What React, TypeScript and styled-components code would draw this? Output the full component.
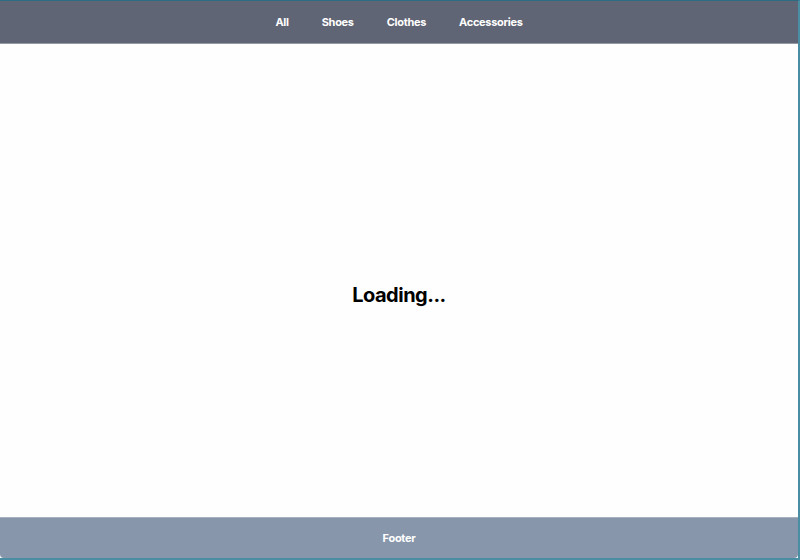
import React from "react";
import styled, { createGlobalStyle } from "styled-components";

const Global = createGlobalStyle`
  html, body { margin: 0; padding: 0; background: #2d6d84; }
  body { font-family: Inter, "Noto Sans", "Liberation Sans", sans-serif; }
  * { box-sizing: border-box; }
`;

const Frame = styled.div`
  width: 800px;
  height: 560px;
  display: flex;
  flex-direction: column;
  border-top: 1px solid #2d6d84;
  border-right: 2px solid #4a8ea3;
  border-bottom: 2px solid #4a8ea3;
  background: #fefeff;
  overflow: hidden;
`;

const Header = styled.header`
  height: 43px;
  flex: none;
  background: #5f6574;
  border-bottom: 1px solid #9499a6;
  display: flex;
  justify-content: center;
  align-items: center;
`;

const Nav = styled.nav`
  display: flex;
  gap: 33px;
`;

const NavLink = styled.a`
  color: #ffffff;
  font-size: 11px;
  letter-spacing: -0.3px;
  font-weight: 700;
  text-decoration: none;
  cursor: pointer;
`;

const Main = styled.main`
  flex: 1;
  display: flex;
  align-items: center;
  justify-content: center;
  padding-top: 29px;
  background: #fefeff;
`;

const Loading = styled.h2`
  margin: 0;
  font-size: 20px;
  letter-spacing: -0.5px;
  font-weight: 700;
  color: #000;
`;

const Footer = styled.footer`
  height: 41px;
  flex: none;
  background: #8796ab;
  border-top: 1px solid #a7b1bf;
  border-radius: 0 0 4px 4px;
  display: flex;
  align-items: center;
  justify-content: center;
  color: #fff;
  font-size: 11px;
  letter-spacing: -0.3px;
  font-weight: 700;
`;

export default function App() {
  return (
    <>
      <Global />
      <Frame>
        <Header>
          <Nav>
            <NavLink>All</NavLink>
            <NavLink>Shoes</NavLink>
            <NavLink>Clothes</NavLink>
            <NavLink>Accessories</NavLink>
          </Nav>
        </Header>
        <Main>
          <Loading>Loading...</Loading>
        </Main>
        <Footer>Footer</Footer>
      </Frame>
    </>
  );
}
